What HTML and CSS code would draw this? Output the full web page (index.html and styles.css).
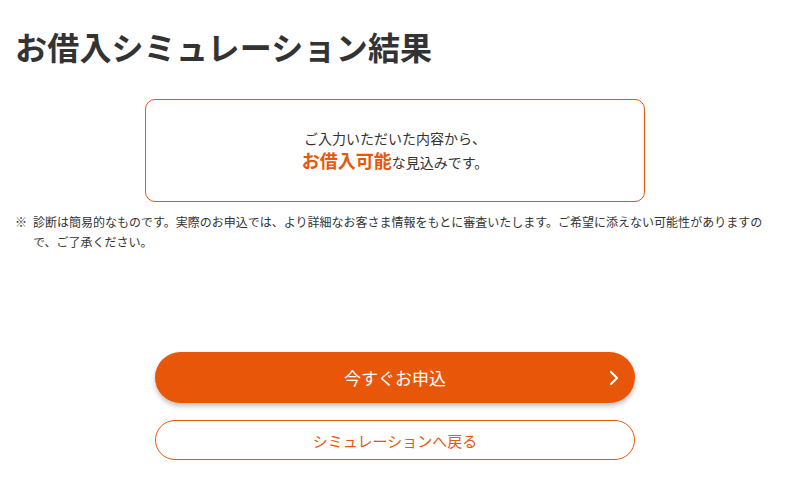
FILE: index.html
```html
<!DOCTYPE html>
<html lang="ja">
<head>
<meta charset="utf-8">
<title>お借入シミュレーション結果</title>
<link rel="stylesheet" href="styles.css">
</head>
<body>
<main class="page">
  <h1 class="title">お借入シミュレーション結果</h1>
  <section class="result">
    <p class="result-line">ご入力いただいた内容から、</p>
    <p class="result-line result-line-main"><strong class="result-strong">お借入可能</strong>な見込みです。</p>
  </section>
  <p class="note"><span class="note-mark">※</span><span class="note-text">診断は簡易的なものです。実際のお申込では、より詳細なお客さま情報をもとに審査いたします。ご希望に添えない可能性がありますので、ご了承ください。</span></p>
  <div class="actions">
    <a class="btn btn-primary" href="#">今すぐお申込
      <svg class="chevron" width="10" height="16" viewBox="0 0 10 16"><path d="M2 2 L8 8 L2 14" fill="none" stroke="#fff" stroke-width="2.2" stroke-linecap="round" stroke-linejoin="round"/></svg>
    </a>
    <a class="btn btn-secondary" href="#">シミュレーションへ戻る</a>
  </div>
</main>
</body>
</html>
```

FILE: styles.css
```css
* { box-sizing: border-box; }
html, body { margin: 0; padding: 0; background: #fff; }
body {
  font-family: "Noto Sans CJK JP", "Noto Sans", sans-serif;
  color: #333;
}
.page {
  padding: 23px 25px 0 15px;
  display: flex;
  flex-direction: column;
}
.title {
  margin: 0;
  font-size: 32px;
  line-height: 46px;
  font-weight: 700;
  color: #333;
  letter-spacing: 0.2px;
}
.result {
  margin: 30px auto 0 auto;
  width: 500px;
  height: 103px;
  border: 1px solid #e8580c;
  border-radius: 10px;
  display: flex;
  flex-direction: column;
  justify-content: center;
  align-items: center;
  gap: 2px;
}
.result-line {
  margin: 0;
  font-size: 14px;
  line-height: 18px;
  color: #333;
}
.result-line-main {
  line-height: 22px;
}
.result-strong {
  font-size: 18px;
  line-height: 22px;
  font-weight: 700;
  color: #e8580c;
}
.note {
  margin: 10px 0 0 0;
  display: flex;
  font-size: 12px;
  line-height: 20px;
  color: #333;
}
.note-mark {
  flex: 0 0 18px;
}
.note-text {
  flex: 1;
}
.actions {
  margin: 100px auto 0 auto;
  width: 480px;
  display: flex;
  flex-direction: column;
  gap: 17px;
}
.btn {
  display: flex;
  align-items: center;
  justify-content: center;
  text-decoration: none;
  border-radius: 999px;
  position: relative;
}
.btn-primary {
  height: 51px;
  background: #e8560a;
  color: #fff;
  font-size: 17px;
  box-shadow: 0 3px 5px rgba(0,0,0,0.25);
}
.chevron {
  position: absolute;
  right: 16px;
  top: 18px;
}
.btn-secondary {
  height: 40px;
  border: 1px solid #e8580c;
  color: #e8580c;
  font-size: 15px;
  background: #fff;
}
```
